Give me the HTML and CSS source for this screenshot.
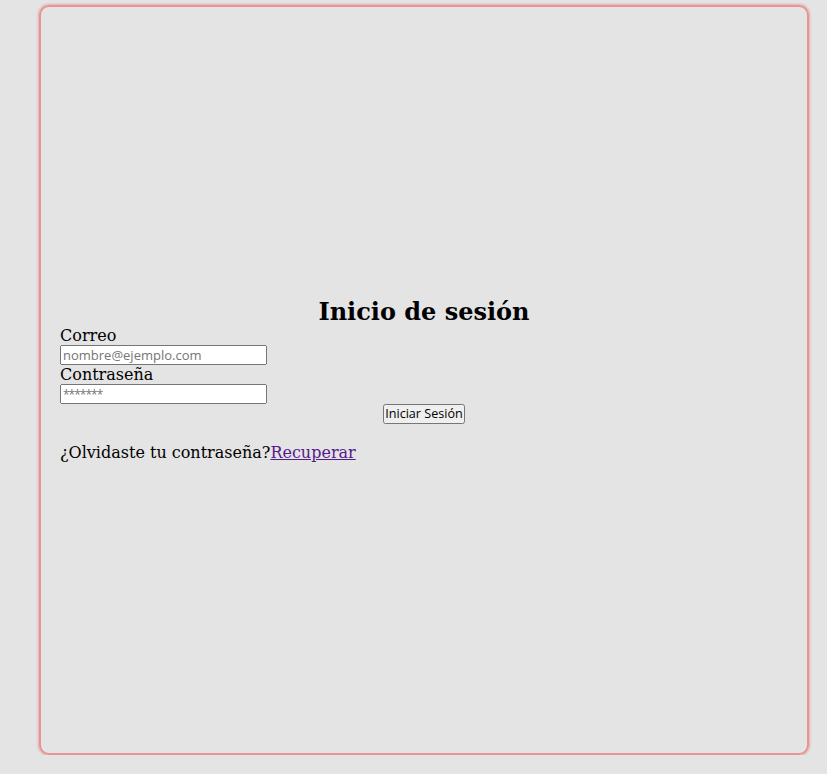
FILE: index.html
```html
<!DOCTYPE html>
<html lang="es">
<head>
<meta charset="utf-8">
<title>Inicio de sesión</title>
<link rel="stylesheet" href="styles.css">
</head>
<body>
<div class="card">
  <form class="login">
    <h2 class="title">Inicio de sesión</h2>
    <label class="label" for="correo">Correo</label>
    <input class="field" id="correo" type="email" placeholder="nombre@ejemplo.com">
    <label class="label" for="clave">Contraseña</label>
    <input class="field field-pass" id="clave" type="password" placeholder="*******">
    <div class="actions"><button class="btn" type="button">Iniciar Sesión</button></div>
    <p class="forgot">¿Olvidaste tu contraseña?<a href="#" class="link">Recuperar</a></p>
  </form>
</div>
</body>
</html>
```
FILE: styles.css
```css
html, body {
  margin: 0;
  background: #e4e4e4;
}
body {
  font-family: "DejaVu Serif", serif;
  font-size: 16px;
}
.card {
  box-sizing: border-box;
  margin: 5px 0 0 39px;
  width: 770px;
  height: 750px;
  border: 2px solid #e89494;
  border-radius: 10px;
  box-shadow: 0 0 2px 1px rgba(230, 120, 120, 0.5);
  padding: 0 19px;
  display: flex;
  flex-direction: column;
  justify-content: center;
}
.login {
  display: flex;
  flex-direction: column;
  align-items: flex-start;
  margin-top: -1px;
}
.title {
  align-self: stretch;
  text-align: center;
  margin: 0;
  font-size: 24px;
}
.label {
  display: block;
}
.field {
  width: 207px;
  height: 20px;
  box-sizing: border-box;
  margin: 0;
  padding: 1px 1px;
  font-family: "Open Sans", sans-serif;
  font-size: 13px;
}
.field-pass::placeholder {
  letter-spacing: -1px;
  font-size: 12px;
}
.actions {
  align-self: stretch;
  text-align: center;
  line-height: 0;
}
.btn {
  margin: 0;
  height: 20px;
  padding: 0;
  font-family: "Open Sans", sans-serif;
  font-size: 12.6px;
  line-height: 16px;
}
.forgot {
  margin: 19px 0 0;
}
.link {
  color: #551a8b;
}
```
